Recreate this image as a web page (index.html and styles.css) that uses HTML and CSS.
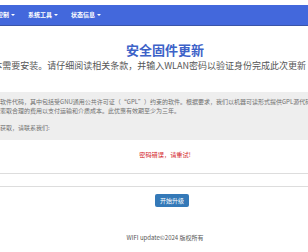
FILE: index.html
```html
<!DOCTYPE html>
<html lang="zh-CN">
<head>
<meta charset="utf-8">
<title>安全固件更新</title>
<link rel="stylesheet" href="styles.css">
</head>
<body>
<nav class="navbar">
  <span class="nav-item first">控制<i class="caret"></i></span>
  <span class="nav-item">系统工具<i class="caret"></i></span>
  <span class="nav-item">状态信息<i class="caret"></i></span>
</nav>
<main class="page">
  <h1 class="title">安全固件更新</h1>
  <div class="subtitle"><span>版本需要安装。请仔细阅读相关条款，并输入WLAN密码以验证身份完成此次更新</span></div>
  <section class="notice">
    <p class="line">软件代码，其中包括受GNU通用公共许可证（“GPL”）约束的软件。根据要求，我们以机器可读形式提供GPL源代码副本<br>索取合理的费用以支付运输和介质成本。此优惠有效期至少为三年。</p>
    <p class="line">获取，请联系我们:</p>
  </section>
  <div class="error">密码错误，请重试!</div>
  <div class="field"><input class="password" type="password" aria-label="WLAN密码"></div>
  <div class="actions"><button class="btn" type="button">开始升级</button></div>
  <footer class="footer">WIFI update©2024 版权所有</footer>
</main>
</body>
</html>
```
FILE: styles.css
```css
html, body {
  margin: 0;
  padding: 0;
  background: #ffffff;
  overflow: hidden;
}
body {
  padding-top: 5px;
  font-family: "Noto Sans CJK SC", "Noto Sans", "Liberation Sans", sans-serif;
  color: #555;
}
.navbar {
  height: 20px;
  background: #4368dc;
  border-bottom: 1px solid #3a55a8;
  display: flex;
  align-items: center;
  gap: 13px;
  overflow: hidden;
}
.nav-item {
  color: #ffffff;
  font-size: 6px;
  line-height: 8px;
  font-weight: 600;
  display: flex;
  align-items: center;
  white-space: nowrap;
}
.nav-item.first {
  margin-left: -3px;
}
.caret {
  display: inline-block;
  width: 0;
  height: 0;
  margin-left: 2px;
  border-left: 2px solid transparent;
  border-right: 2px solid transparent;
  border-top: 2px solid #ffffff;
}
.page {
  display: flex;
  flex-direction: column;
}
.title {
  margin: 16px 0 0;
  padding-left: 22px;
  text-align: center;
  font-size: 13px;
  line-height: 16px;
  font-weight: bold;
  color: #3d62c8;
}
.subtitle {
  margin-top: 2px;
  height: 12px;
  display: flex;
  justify-content: flex-end;
  padding-right: 2px;
  overflow: hidden;
  white-space: nowrap;
  font-size: 9px;
  line-height: 12px;
  color: #555;
}
.subtitle span {
  flex: none;
}
.notice {
  margin-top: 20px;
  background: #eeeeee;
  padding: 5px 0 8px;
  overflow: hidden;
}
.line {
  margin: 0;
  white-space: nowrap;
  font-size: 6px;
  line-height: 9px;
  color: #707070;
}
.line + .line {
  margin-top: 8px;
}
.error {
  margin-top: 10px;
  padding-left: 22px;
  text-align: center;
  font-size: 6.2px;
  line-height: 10px;
  color: #d2191c;
}
.field {
  margin-top: 13px;
  overflow: hidden;
}
.password {
  display: block;
  box-sizing: border-box;
  width: calc(100% + 6px);
  margin-left: -3px;
  height: 14px;
  border: 1px solid #dddddd;
  padding: 0;
  background: #ffffff;
}
.actions {
  margin-top: 7px;
  padding-left: 36px;
  display: flex;
  justify-content: center;
}
.btn {
  width: 34px;
  height: 13px;
  padding: 0;
  border: none;
  border-radius: 2px;
  background: #3479b8;
  color: #ffffff;
  font-family: "Noto Sans CJK SC", sans-serif;
  font-size: 6px;
  line-height: 13px;
}
.footer {
  margin-top: 26px;
  padding-left: 22px;
  text-align: center;
  font-size: 6px;
  line-height: 10px;
  color: #555;
}
```
